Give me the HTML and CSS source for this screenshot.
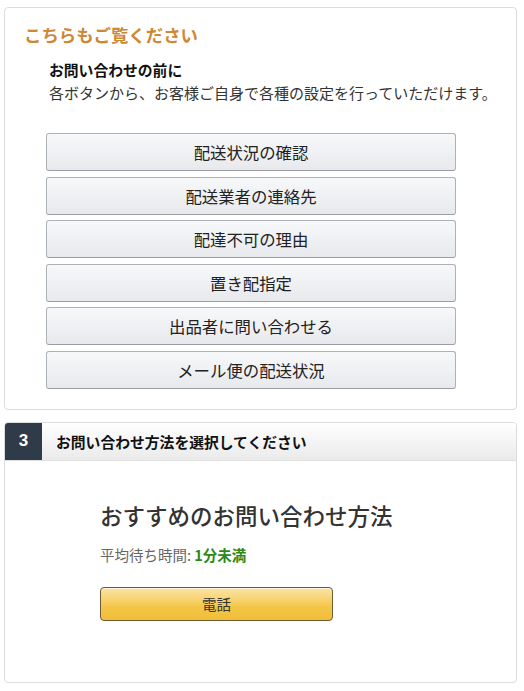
FILE: index.html
```html
<!DOCTYPE html>
<html lang="ja">
<head>
<meta charset="utf-8">
<link rel="stylesheet" href="styles.css">
</head>
<body>
<div class="page">
  <section class="box see-also">
    <h2 class="see-title">こちらもご覧ください</h2>
    <div class="intro">
      <div class="intro-title">お問い合わせの前に</div>
      <div class="intro-text">各ボタンから、お客様ご自身で各種の設定を行っていただけます。</div>
    </div>
    <div class="btn-list">
      <button class="gbtn">配送状況の確認</button>
      <button class="gbtn">配送業者の連絡先</button>
      <button class="gbtn">配達不可の理由</button>
      <button class="gbtn">置き配指定</button>
      <button class="gbtn">出品者に問い合わせる</button>
      <button class="gbtn">メール便の配送状況</button>
    </div>
  </section>

  <section class="box step">
    <div class="step-head">
      <div class="step-num">3</div>
      <div class="step-title">お問い合わせ方法を選択してください</div>
    </div>
    <div class="step-body">
      <div class="rec-title">おすすめのお問い合わせ方法</div>
      <div class="wait">平均待ち時間: <span class="wait-val">1分未満</span></div>
      <button class="ybtn">電話</button>
    </div>
  </section>
</div>
</body>
</html>
```
FILE: styles.css
```css
* { box-sizing: border-box; }
body {
  margin: 0;
  background: #fff;
  font-family: "Noto Sans CJK JP", "Liberation Sans", sans-serif;
  color: #333;
}
.page {
  padding: 7px 7px 0 4px;
}
.box {
  border: 1px solid #dcdcdc;
  border-radius: 4px;
  background: #fff;
}
.see-also {
  padding: 15px 19px 20px 19px;
}
.see-title {
  margin: 0;
  font-size: 17.4px;
  line-height: 24px;
  font-weight: bold;
  color: #cd8735;
}
.intro {
  margin: 12px 0 0 25px;
}
.intro-title {
  font-size: 14.8px;
  line-height: 22px;
  font-weight: bold;
  color: #111;
}
.intro-text {
  font-size: 15px;
  line-height: 24px;
  color: #333;
}
.btn-list {
  margin: 28px 0 0 22px;
  width: 410px;
  display: flex;
  flex-direction: column;
  gap: 5.6px;
}
.gbtn {
  height: 38px;
  width: 100%;
  font-family: inherit;
  font-size: 16.4px;
  color: #222;
  border: 1px solid #adb1b8;
  border-bottom-color: #9a9da3;
  border-radius: 3px;
  background: linear-gradient(to bottom, #f7f8fa, #e7e9ec);
  padding: 0;
}
.step {
  margin-top: 12px;
  overflow: hidden;
}
.step-head {
  display: flex;
  height: 38px;
  background: linear-gradient(to bottom, #ffffff, #eaeaea);
  border-bottom: 1px solid #e0e0e0;
}
.step-num {
  width: 37px;
  background: #2f3b48;
  color: #fff;
  font-family: "Liberation Sans", sans-serif;
  font-weight: bold;
  font-size: 17px;
  display: flex;
  align-items: center;
  justify-content: center;
}
.step-title {
  padding-left: 14px;
  display: flex;
  align-items: center;
  font-size: 14.8px;
  font-weight: bold;
  color: #111;
}
.step-body {
  padding: 39px 0 61px 95px;
}
.rec-title {
  font-size: 22.5px;
  line-height: 30px;
  font-weight: 500;
  color: #333;
}
.wait {
  margin-top: 15px;
  font-size: 14.5px;
  line-height: 20px;
  color: #666;
}
.wait-val {
  color: #2a8a1a;
  font-weight: bold;
}
.ybtn {
  display: block;
  margin-top: 22px;
  width: 233px;
  height: 34px;
  font-family: inherit;
  font-size: 14.5px;
  color: #333;
  border: 1px solid #6e5a33;
  border-radius: 4px;
  background: linear-gradient(to bottom, #fbe3a4 0%, #f8d67a 30%, #f4c545 60%, #f0be3b 100%);
  box-shadow: inset 0 1px 0 rgba(255,255,255,0.6);
  padding: 0;
}
```
